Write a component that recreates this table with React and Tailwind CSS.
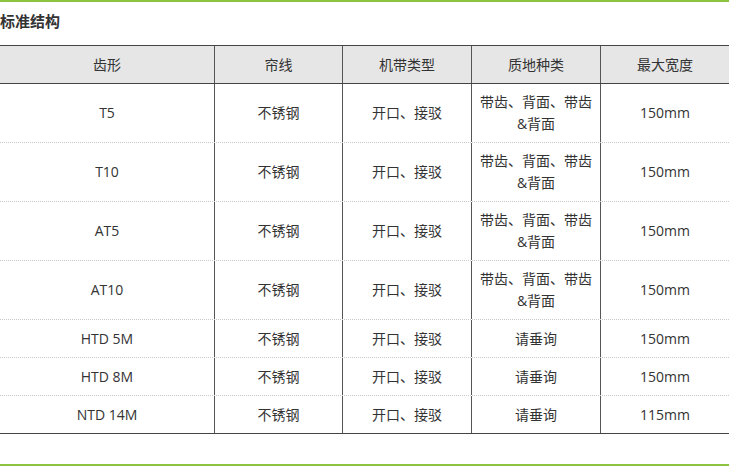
import React from "react";

const font = { fontFamily: '"Open Sans","Noto Sans CJK SC",sans-serif' };

const rows = [
  ["T5", "不锈钢", "开口、接驳", "two", "150mm", "h-[59px]"],
  ["T10", "不锈钢", "开口、接驳", "two", "150mm", "h-[59px]"],
  ["AT5", "不锈钢", "开口、接驳", "two", "150mm", "h-[59px]"],
  ["AT10", "不锈钢", "开口、接驳", "two", "150mm", "h-[59px]"],
  ["HTD 5M", "不锈钢", "开口、接驳", "请垂询", "150mm", "h-[38px]"],
  ["HTD 8M", "不锈钢", "开口、接驳", "请垂询", "150mm", "h-[38px]"],
  ["NTD 14M", "不锈钢", "开口、接驳", "请垂询", "115mm", "h-[37px]"],
];

const widths = ["w-[214px]", "w-[128px]", "w-[129px]", "w-[129px]", "w-[129px]"];

function Cell({ i, children }) {
  return (
    <div
      className={`${widths[i]} shrink-0 flex items-center justify-center text-center leading-[22px] ${
        i > 0 ? "border-l border-[#555]" : ""
      }`}
    >
      {children}
    </div>
  );
}

export default function App() {
  return (
    <div className="w-[729px] h-[466px] bg-white overflow-hidden text-[#333] text-[14px]" style={font}>
      <div className="h-[2px] bg-[#8cc43f]" />
      <div className="h-[43px] flex items-start pt-[9px]">
        <span className="text-[15px] font-bold leading-[20px] text-[#333]">标准结构</span>
      </div>
      <div className="border-t border-b border-[#444] w-[729px]">
        <div className="flex h-[38px] bg-[#e6e6e6] border-b border-[#444]">
          {["齿形", "帘线", "机带类型", "质地种类", "最大宽度"].map((h, i) => (
            <Cell key={i} i={i}>{h}</Cell>
          ))}
        </div>
        {rows.map((r, ri) => (
          <div
            key={ri}
            className={`flex ${r[5]} ${ri < rows.length - 1 ? "border-b border-dotted border-[#c8c8c8]" : ""}`}
          >
            <Cell i={0}>{r[0]}</Cell>
            <Cell i={1}>{r[1]}</Cell>
            <Cell i={2}>{r[2]}</Cell>
            <Cell i={3}>
              {r[3] === "two" ? (
                <span>
                  带齿、背面、带齿
                  <br />
                  &amp;背面
                </span>
              ) : (
                r[3]
              )}
            </Cell>
            <Cell i={4}>{r[4]}</Cell>
          </div>
        ))}
      </div>
      <div className="h-[30px]" />
      <div className="h-[2px] bg-[#8cc43f]" />
    </div>
  );
}
